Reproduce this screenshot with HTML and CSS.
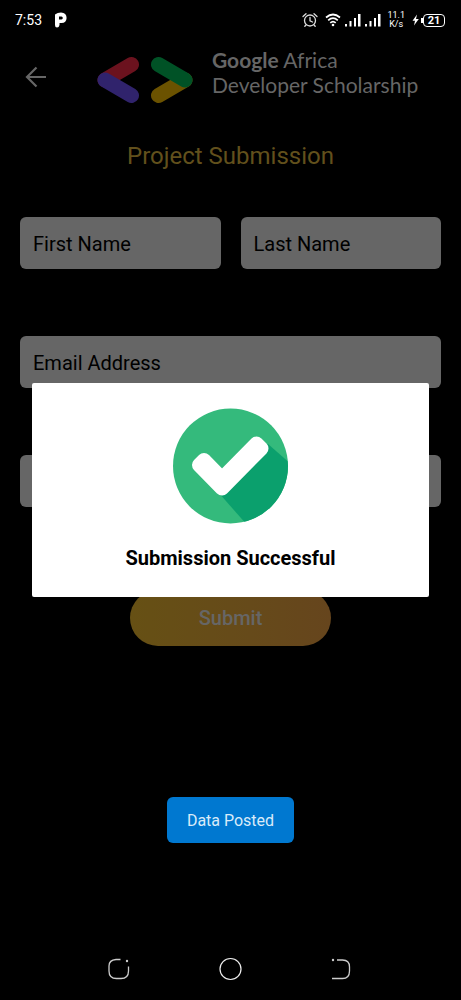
FILE: index.html
```html
<!DOCTYPE html>
<html lang="en">
<head>
<meta charset="utf-8">
<meta name="viewport" content="width=device-width, initial-scale=1">
<title>Project Submission</title>
<link rel="stylesheet" href="styles.css">
</head>
<body>
<div class="screen">
  <header class="status">
    <span class="clock">7:53</span>
    <svg class="p-icon" width="14" height="16" viewBox="0 0 14 16" aria-hidden="true"><path fill="#fff" fill-rule="evenodd" d="M1 2.500Q3.500 .5 7 .5Q12.600 .8 12.600 6Q12.400 11 7.500 11H5.500V13Q5 15.500 3 15.500Q1 15.500 1 13ZM5 4.500V7.500H7.500Q8.800 7.300 8.800 6Q8.800 4.600 7.500 4.500Z"/></svg>
    <div class="status-right">
      <svg width="16" height="16" viewBox="0 0 16 16" fill="none" stroke="#ddd" stroke-width="1.300" stroke-linecap="round" aria-hidden="true"><circle cx="8" cy="8.500" r="5.500"/><path d="M8 5.500V8.800L10.500 10M1 4.500L4 1.800M15 4.500L12 1.800M4 13L2.800 14.300M12 13L13.200 14.300"/></svg>
      <svg class="wifi" width="16" height="14" viewBox="0 0 16 14" fill="none" stroke="#fff" stroke-width="1.700" aria-hidden="true"><path d="M1 4.500Q8-1.500 15 4.500M3.200 7.300Q8 3 12.800 7.300M5.300 9.900Q8 7.400 10.700 9.900"/><circle cx="8" cy="12" r="1.300" fill="#fff" stroke="none"/></svg>
      <svg width="16" height="14" viewBox="0 0 16 14" fill="#fff" aria-hidden="true"><path d="M0 11h2v2.500H0zM4.500 8h2v5.500h-2zM9 5h2v8.500H9zM13 1h2.500v12.500H13z"/></svg>
      <svg width="16" height="14" viewBox="0 0 16 14" fill="#fff" aria-hidden="true"><path d="M0 11h2v2.500H0zM4.500 8h2v5.500h-2zM9 5h2v8.500H9zM13 1h2.500v12.500H13z"/></svg>
      <span class="speed"><span>11.1</span><span>K/s</span></span>
      <svg width="7" height="12" viewBox="0 0 7 12" fill="#fff" aria-hidden="true"><path d="M5 .5L.5 6.700H3L2 11.500L6.800 5H4Z"/></svg>
      <span class="battery">21</span>
    </div>
  </header>

  <main class="page">
    <div class="top">
      <button class="back" type="button" aria-label="Back">
        <svg width="22" height="22" viewBox="0 0 22 22" fill="none" stroke="#666" stroke-width="2.200"><path d="M21 11H2.500M11.500 1.500L2 11L11.500 20.500"/></svg>
      </button>
      <svg class="logo" width="96" height="48" viewBox="0 0 96 48" fill="none" stroke-width="15" stroke-linecap="round" aria-hidden="true">
        <path stroke="#6b121e" d="M34.500 8.500L8 24"/><path stroke="#30236c" d="M8 24L34.500 39.500"/>
        <path stroke="#6b5200" d="M61.500 39.500L88 24"/><path stroke="#005226" d="M61.500 8.500L88 24"/>
      </svg>
      <p class="brand"><b>Google</b> Africa<br>Developer Scholarship</p>
    </div>
    <h1 class="title">Project Submission</h1>
    <form class="form">
      <div class="names">
        <input class="field" type="text" aria-label="First Name" placeholder="First Name">
        <input class="field" type="text" aria-label="Last Name" placeholder="Last Name">
      </div>
      <input class="field" type="email" aria-label="Email Address" placeholder="Email Address">
      <input class="field" type="url" aria-label="Project link">
      <button class="submit" type="button">Submit</button>
    </form>
    <div class="toast" role="status">Data Posted</div>
  </main>

  <nav class="navbar">
    <button type="button" aria-label="Recent apps"><svg width="24" height="24" viewBox="0 0 24 24" fill="none" stroke="#ccc" stroke-width="1.300"><path d="M13.500 2.500H9Q2 3 2 9V14Q2 21.500 9.500 21.500H14Q21.500 21.500 21.500 14V9.500"/><circle cx="20" cy="4" r="1.200" fill="#ccc" stroke="none"/></svg></button>
    <button type="button" aria-label="Home"><svg width="24" height="24" viewBox="0 0 24 24" fill="none" stroke="#eee" stroke-width="1.200"><circle cx="11.500" cy="12" r="10.500"/></svg></button>
    <button type="button" aria-label="Go back"><svg width="24" height="24" viewBox="0 0 24 24" fill="none" stroke="#ccc" stroke-width="1.300"><path d="M6 3H11.500Q18.500 3 18.500 10V14Q18.500 21.500 11.500 21.500H1"/><circle cx="2" cy="3" r="1.200" fill="#ccc" stroke="none"/></svg></button>
  </nav>

  <div class="overlay">
    <section class="dialog" role="dialog" aria-labelledby="message">
      <svg width="116" height="116" viewBox="0 0 116 116" aria-hidden="true">
        <defs><clipPath id="disc"><circle cx="57.500" cy="58" r="57.500"/></clipPath></defs>
        <circle cx="57.500" cy="58" r="57.500" fill="#34ba7c"/>
        <path clip-path="url(#disc)" fill="#0ba06d" d="M45 84L95 36L118 56V118H75Z"/>
        <path fill="none" stroke="#fff" stroke-width="14" stroke-linejoin="round" d="M26 57L31 52L49 70.500L83.500 35.500L88.500 40.500L49 80.500Z"/>
      </svg>
      <h2 class="message" id="message">Submission Successful</h2>
    </section>
  </div>
</div>
</body>
</html>
```
FILE: styles.css
```css
* {
  box-sizing: border-box;
}

body {
  margin: 0;
  background: #000;
  font-family: Roboto, "Liberation Sans", sans-serif;
}

button {
  padding: 0;
  border: 0;
  background: none;
  font: inherit;
}

svg {
  display: block;
  flex: none;
}

.screen {
  position: relative;
  display: flex;
  flex-direction: column;
  min-height: 100vh;
}

.status {
  display: flex;
  align-items: center;
  height: 40px;
  padding: 0 16px 0 15px;
  color: #fff;
}

.clock {
  font-size: 14px;
  line-height: 16px;
}

.p-icon {
  margin-left: 12px;
}

.status-right {
  display: flex;
  align-items: center;
  gap: 4px;
  margin-left: auto;
}

.wifi {
  margin-left: 3px;
}

.speed {
  display: flex;
  flex-direction: column;
  align-items: center;
  margin: 0 3px 0 2px;
  font-size: 9px;
  line-height: 9px;
}

.battery {
  position: relative;
  width: 22px;
  border: 1px solid #fff;
  border-radius: 4px;
  font-size: 11px;
  font-weight: 700;
  line-height: 11px;
  text-align: center;
}

.battery::before {
  content: "";
  position: absolute;
  top: 3px;
  left: -3px;
  width: 2px;
  height: 5px;
  background: #fff;
}

.page {
  display: flex;
  flex: 1;
  flex-direction: column;
  padding: 8px 20px 0;
}

.top {
  display: flex;
  align-items: center;
  height: 60px;
}

.back {
  margin: 0 0 2px 5px;
}

.logo {
  margin-top: 4px;
  margin-left: 50px;
}

.brand {
  margin: 0 0 12px 19px;
  color: #666;
  font-family: Lato, sans-serif;
  font-size: 21px;
  line-height: 25px;
  white-space: nowrap;
}

.title {
  margin: 32px 0 0;
  color: #62501c;
  font-size: 24px;
  font-weight: 400;
  line-height: 32px;
  text-align: center;
}

.form {
  display: flex;
  flex-direction: column;
  gap: 67px;
  margin-top: 45px;
}

.names {
  display: grid;
  grid-template-columns: 1fr 1fr;
  gap: 20px;
}

.field {
  width: 100%;
  height: 52px;
  padding: 2px 13px 0;
  border: 0;
  border-radius: 6px;
  background: #666;
  color: #000;
  font: 20px Roboto, sans-serif;
}

.field::placeholder {
  color: #000;
  opacity: 1;
}

.submit {
  align-self: center;
  width: 201px;
  height: 56px;
  margin-top: 16px;
  border-radius: 28px;
  background: linear-gradient(90deg, #665014, #664a1a 60%, #66451d);
  color: #666;
  font-size: 20px;
  font-weight: 500;
}

.toast {
  align-self: center;
  margin-top: 151px;
  padding: 2px 20px 0;
  border-radius: 6px;
  background: #0078d0;
  color: #d9ebf9;
  font-size: 16px;
  line-height: 44px;
}

.navbar {
  display: flex;
  justify-content: center;
  gap: 88px;
  height: 60px;
  padding-top: 17px;
}

.navbar button {
  height: 24px;
}

.overlay {
  position: absolute;
  inset: 40px 0 60px;
  display: grid;
  align-items: center;
  padding: 0 32px;
}

.dialog {
  display: flex;
  flex-direction: column;
  align-items: center;
  padding: 25px 0 27px;
  border-radius: 2px;
  background: #fff;
}

.message {
  margin: 22px 0 0;
  color: #000;
  font-size: 20px;
  font-weight: 700;
  line-height: 24px;
}
```
